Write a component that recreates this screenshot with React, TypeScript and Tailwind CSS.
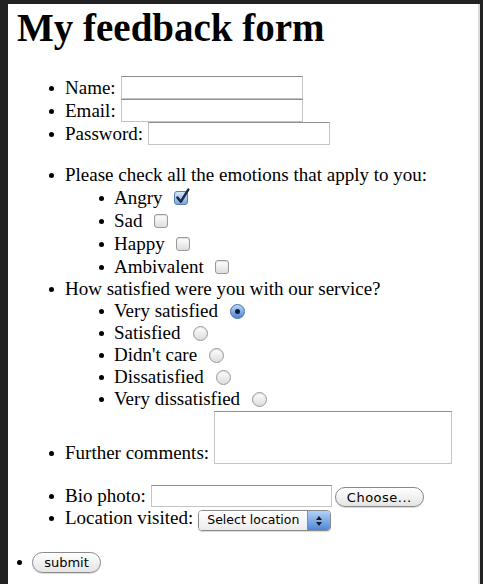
import React from "react";

const serif = "font-['Liberation_Serif','Times_New_Roman',serif]";
const ui = "font-['DejaVu_Sans','Liberation_Sans',sans-serif]";

function Dot({ sub }: { sub?: boolean }) {
  return (
    <span
      className={
        sub
          ? "mb-[3px] mr-[10px] inline-block h-[5px] w-[5px] rounded-full bg-black"
          : "mb-[3px] mr-[11px] inline-block h-[5px] w-[5px] rounded-full bg-black"
      }
    />
  );
}

function TextBox({ className }: { className: string }) {
  return (
    <input
      type="text"
      className={`border border-[#c4c4c4] border-t-[#8f8f8f] bg-white outline-none ${className}`}
    />
  );
}

function CheckBox({ checked }: { checked?: boolean }) {
  if (checked) {
    return (
      <span className="relative mb-[4px] ml-[11px] inline-block h-[14px] w-[14px] rounded-[3px] border border-[#5d7fb0] bg-linear-to-b from-[#d5e5f8] to-[#7ea9df]">
        <svg
          viewBox="0 0 14 14"
          className="absolute left-[-1px] top-[-3px] h-[16px] w-[16px] overflow-visible"
        >
          <path d="M3 7.5 L6 11 L12.5 0.5" fill="none" stroke="#1b2a47" strokeWidth="2.2" strokeLinecap="round" strokeLinejoin="round" />
        </svg>
      </span>
    );
  }
  return (
    <span className="mb-[4px] ml-[11px] inline-block h-[14px] w-[14px] rounded-[3px] border border-[#9a9a9a] bg-linear-to-b from-white to-[#dedede] shadow-[inset_0_1px_1px_rgba(0,0,0,0.12)]" />
  );
}

function Radio({ checked }: { checked?: boolean }) {
  if (checked) {
    return (
      <span className="mb-[3px] ml-[12px] flex h-[15px] w-[15px] items-center justify-center rounded-full border border-[#4b6fa6] bg-linear-to-b from-[#b9d3f4] to-[#4f86d6]">
        <span className="h-[5px] w-[5px] rounded-full bg-[#0f1c36]" />
      </span>
    );
  }
  return (
    <span className="mb-[3px] ml-[12px] inline-block h-[15px] w-[15px] rounded-full border border-[#9a9a9a] bg-linear-to-b from-white to-[#dcdcdc] shadow-[inset_0_1px_1px_rgba(0,0,0,0.12)]" />
  );
}

function PillButton({ label, className }: { label: string; className: string }) {
  return (
    <button
      type="button"
      className={`${ui} flex items-center justify-center rounded-full border border-[#8a8a8a] bg-linear-to-b from-white to-[#e4e4e4] text-[13px] leading-none text-black shadow-[0_1px_1px_rgba(0,0,0,0.15)] ${className}`}
    >
      {label}
    </button>
  );
}

const emotions = [
  { label: "Angry", checked: true },
  { label: "Sad" },
  { label: "Happy" },
  { label: "Ambivalent" },
];

const ratings = [
  { label: "Very satisfied", checked: true },
  { label: "Satisfied" },
  { label: "Didn't care" },
  { label: "Dissatisfied" },
  { label: "Very dissatisfied" },
];

export default function App() {
  return (
    <div className="min-h-[584px] bg-[#222222] pl-[8px] pr-[3px] pt-[4px]">
      <div className={`${serif} min-h-[580px] border-r-2 border-[#d9d9d9] bg-white pt-[4px] text-[19px] text-black`}>
        <h1 className="h-[39px] pl-[9px] text-[39px] font-bold leading-[39px]">My feedback form</h1>

        <ul className="mt-[29px] pl-[41px]">
          <li className="flex h-[23px] items-end">
            <span className="whitespace-nowrap leading-[22px]"><Dot />Name:</span>
            <TextBox className="ml-[5px] h-[23px] w-[182px]" />
          </li>
          <li className="flex h-[23px] items-end">
            <span className="whitespace-nowrap leading-[22px]"><Dot />Email:</span>
            <TextBox className="ml-[5px] h-[23px] w-[182px]" />
          </li>
          <li className="flex h-[23px] items-end">
            <span className="whitespace-nowrap leading-[22px]"><Dot />Password:</span>
            <TextBox className="ml-[5px] h-[23px] w-[182px]" />
          </li>

          <li className="mt-[19px]">
            <div className="flex h-[22px] items-end">
              <span className="whitespace-nowrap leading-[22px]"><Dot />Please check all the emotions that apply to you:</span>
            </div>
            <ul className="ml-[50px]">
              {emotions.map((e) => (
                <li key={e.label} className="flex h-[23px] items-end">
                  <span className="whitespace-nowrap leading-[22px]"><Dot sub />{e.label}</span>
                  <CheckBox checked={e.checked} />
                </li>
              ))}
            </ul>
          </li>

          <li>
            <div className="flex h-[22px] items-end">
              <span className="whitespace-nowrap leading-[22px]"><Dot />How satisfied were you with our service?</span>
            </div>
            <ul className="ml-[50px]">
              {ratings.map((r) => (
                <li key={r.label} className="flex h-[22px] items-end">
                  <span className="whitespace-nowrap leading-[22px]"><Dot sub />{r.label}</span>
                  <Radio checked={r.checked} />
                </li>
              ))}
            </ul>
          </li>

          <li className="mt-[1px] flex h-[53px] items-end">
            <span className="whitespace-nowrap leading-[22px]"><Dot />Further comments:</span>
            <textarea className="ml-[5px] h-[53px] w-[238px] resize-none border border-[#c4c4c4] border-t-[#8f8f8f] bg-white outline-none" />
          </li>

          <li className="mt-[21px] flex h-[22px] items-end">
            <span className="whitespace-nowrap leading-[22px]"><Dot />Bio photo:</span>
            <TextBox className="ml-[5px] h-[22px] w-[181px]" />
            <PillButton label="Choose..." className="ml-[3px] h-[20px] w-[89px] tracking-[0.5px]" />
          </li>
          <li className="flex h-[24px] items-end">
            <span className="mb-[2px] whitespace-nowrap leading-[22px]"><Dot />Location visited:</span>
            <div className={`${ui} ml-[5px] flex h-[21px] w-[133px] overflow-hidden rounded-[4px] border border-[#8a8a8a] shadow-[0_1px_1px_rgba(0,0,0,0.15)]`}>
              <span className="flex flex-1 items-center bg-linear-to-b from-white to-[#ececec] pl-[8px] text-[12.5px] leading-none text-black">
                Select location
              </span>
              <span className="flex w-[23px] flex-col items-center justify-center gap-[2px] border-l border-[#6f8fbf] bg-linear-to-b from-[#b4d1f4] to-[#4a88d9]">
                <svg viewBox="0 0 6 4" className="h-[4px] w-[6px]"><path d="M3 0 L6 4 L0 4 Z" fill="#1a1a1a" /></svg>
                <svg viewBox="0 0 6 4" className="h-[4px] w-[6px]"><path d="M0 0 L6 0 L3 4 Z" fill="#1a1a1a" /></svg>
              </span>
            </div>
          </li>
        </ul>

        <ul className="mt-[21px] pl-[9px]">
          <li className="flex h-[21px] items-center">
            <span className="mr-[10px] inline-block h-[5px] w-[5px] rounded-full bg-black" />
            <PillButton label="submit" className="h-[21px] w-[69px]" />
          </li>
        </ul>
      </div>
    </div>
  );
}
